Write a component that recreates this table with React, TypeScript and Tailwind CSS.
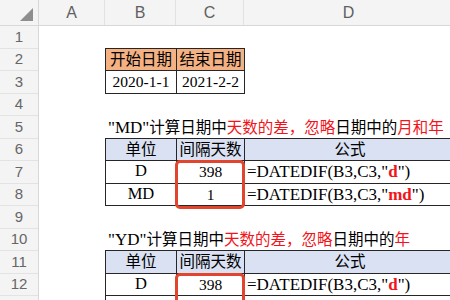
import React from 'react';

const ROWS = 12;
const cols = [
  { name: 'A', w: 'w-[66px]' },
  { name: 'B', w: 'w-[71px]' },
  { name: 'C', w: 'w-[68px]' },
  { name: 'D', w: 'w-[210px]' },
];

const serif = 'font-["Liberation_Serif","Noto_Sans_CJK_SC",serif]';
const red = 'text-[#f2141a]';

type Row = { unit: string; days: string; arg?: string };

function Formula({ arg }: { arg: string }) {
  return (
    <span className="text-[17px]">
      =DATEDIF(B3,C3,"<span className={`${red} font-semibold`}>{arg}</span>")
    </span>
  );
}

function Title({ code, tail }: { code: string; tail: string }) {
  return (
    <div className={`h-[22.5px] flex items-center pl-[69px] text-[15.5px] text-black whitespace-nowrap ${serif}`}>
      <span className="text-[17px]">"{code}"</span>计算日期中<span className={red}>天数的差，忽略</span>日期中的
      <span className={red}>{tail}</span>
    </div>
  );
}

function DiffTable({ rows, boxH }: { rows: Row[]; boxH: string }) {
  return (
    <div className={`relative ml-[66px] -mt-px border-t border-l border-[#262626] text-[15.5px] text-black ${serif}`}>
      <div className="flex h-[22.5px] bg-[#d9e1f2]">
        <div className="w-[71px] flex items-center justify-center border-r border-b border-[#262626]">单位</div>
        <div className="w-[68px] flex items-center justify-center border-r border-b border-[#262626]">间隔天数</div>
        <div className="w-[210px] flex items-center justify-center border-b border-[#262626]">公式</div>
      </div>
      {rows.map((r, i) => (
        <div key={i} className="flex h-[22.5px]">
          <div className="w-[71px] flex items-center justify-center border-r border-b border-[#262626] text-[16.5px]">{r.unit}</div>
          <div className="w-[68px] flex items-center justify-center border-r border-b border-[#262626]">{r.days}</div>
          <div className="w-[210px] flex items-center pl-[2px] border-b border-[#262626] whitespace-nowrap">
            {r.arg && <Formula arg={r.arg} />}
          </div>
        </div>
      ))}
      <div className={`absolute left-[69px] top-[21.5px] w-[70px] ${boxH} border-[3px] border-[#e2452e] rounded-[5px]`} />
    </div>
  );
}

export default function App() {
  return (
    <div className="w-[450px] h-[300px] overflow-hidden bg-white flex flex-col">
      {/* column header */}
      <div className="flex h-[26px] shrink-0 bg-[#f4f4f4] border-b border-[#d8d8d8] font-['Liberation_Sans',sans-serif] text-[16px] text-[#5f5f5f]">
        <div className="w-[39px] shrink-0 border-r border-[#d8d8d8] relative">
          <svg className="absolute left-[20px] top-[8px]" width="13" height="13" viewBox="0 0 13 13">
            <polygon points="13,0 13,13 0,13" fill="#8e8e8e" />
          </svg>
        </div>
        {cols.map((c) => (
          <div key={c.name} className={`${c.w} shrink-0 flex items-center justify-center border-r border-[#e2e2e2]`}>
            {c.name}
          </div>
        ))}
      </div>

      <div className="flex">
        {/* row numbers */}
        <div className="w-[39px] shrink-0 flex flex-col bg-[#f4f4f4] border-r border-[#d8d8d8] font-['Liberation_Sans',sans-serif] text-[15px] text-[#666]">
          {Array.from({ length: ROWS + 1 }, (_, i) => (
            <div key={i} className="h-[22.5px] shrink-0 flex items-center justify-center border-b border-[#e3e3e3]">
              {i < ROWS ? i + 1 : ''}
            </div>
          ))}
        </div>

        {/* sheet cells */}
        <div className="flex flex-col">
          <div className="h-[22.5px]" />
          <div className={`ml-[66px] -mt-px w-fit border-t border-l border-[#262626] text-[15.5px] text-black ${serif}`}>
            <div className="flex h-[22.5px] bg-[#f4b183]">
              <div className="w-[71px] flex items-center justify-center border-r border-b border-[#262626]">开始日期</div>
              <div className="w-[68px] flex items-center justify-center border-r border-b border-[#262626]">结束日期</div>
            </div>
            <div className="flex h-[22.5px]">
              <div className="w-[71px] flex items-center justify-center border-r border-b border-[#262626]">2020-1-1</div>
              <div className="w-[68px] flex items-center justify-center border-r border-b border-[#262626]">2021-2-2</div>
            </div>
          </div>
          <div className="h-[22.5px]" />
          <Title code="MD" tail="月和年" />
          <DiffTable
            boxH="h-[49px]"
            rows={[
              { unit: 'D', days: '398', arg: 'd' },
              { unit: 'MD', days: '1', arg: 'md' },
            ]}
          />
          <div className="h-[22.5px]" />
          <Title code="YD" tail="年" />
          <DiffTable
            boxH="h-[50px]"
            rows={[
              { unit: 'D', days: '398', arg: 'd' },
              { unit: '', days: '' },
            ]}
          />
        </div>
      </div>
    </div>
  );
}
